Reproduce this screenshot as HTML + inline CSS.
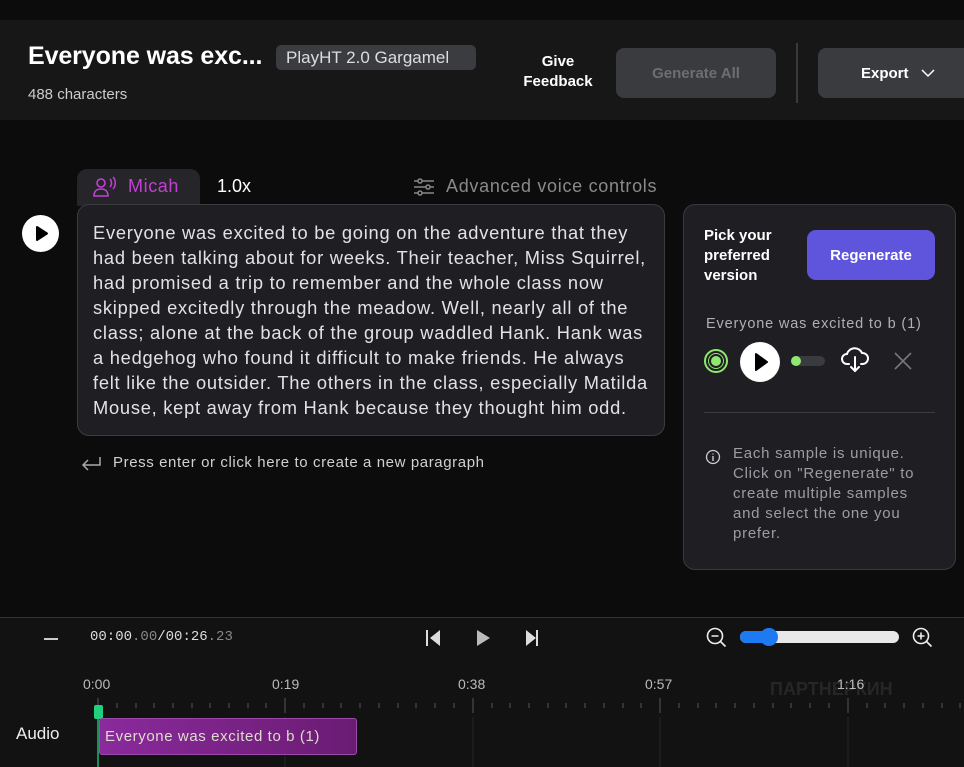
<!DOCTYPE html>
<html><head><meta charset="utf-8"><style>
*{margin:0;padding:0;box-sizing:border-box}
body{width:964px;height:767px;overflow:hidden;background:#0c0c0d;font-family:"Liberation Sans",sans-serif;color:#fff;position:relative}
.a{position:absolute;white-space:nowrap}
.btn{position:absolute;background:#3a3b3f;border-radius:8px;display:flex;align-items:center;justify-content:center;font-weight:bold;font-size:15px}
</style></head><body>
<div class="a" style="left:0;top:20px;width:964px;height:100px;background:#171717"></div>
<div class="a" style="left:28px;top:42px;font-size:25px;font-weight:bold;letter-spacing:-0.1px">Everyone was exc...</div>
<div class="a" style="left:276px;top:45px;width:200px;height:25px;background:#3b3c40;border-radius:5px;font-size:17px;color:#ddd;padding:3px 0 0 10px">PlayHT 2.0 Gargamel</div>
<div class="a" style="left:28px;top:86px;font-size:15px;color:#ccc">488 characters</div>
<div class="a" style="left:516px;top:52px;width:84px;text-align:center;font-size:15px;font-weight:bold;line-height:20px">Give<br>Feedback</div>
<div class="btn" style="left:616px;top:48px;width:160px;height:50px;color:#6e6e70">Generate All</div>
<div class="a" style="left:796px;top:43px;width:2px;height:60px;background:#3a3a3a"></div>
<div class="btn" style="left:818px;top:48px;width:160px;height:50px;justify-content:flex-start;padding-left:43px">Export <svg width="14" height="10" style="margin-left:12px" viewBox="0 0 14 10"><path d="M1 2l6 6 6-6" stroke="#fff" stroke-width="1.5" fill="none"/></svg></div>

<div class="a" style="left:77px;top:169px;width:123px;height:37px;background:#26262a;border-radius:10px 10px 0 0"></div>
<svg class="a" style="left:93px;top:176px" width="26" height="22" viewBox="0 0 26 22"><circle cx="8" cy="7" r="4" stroke="#c43fd6" stroke-width="1.6" fill="none"/><path d="M1 20c0-5 3-7 7-7s7 2 7 7z" stroke="#c43fd6" stroke-width="1.6" fill="none"/><path d="M17 3c2 2 2 6 0 8M20 1c3 3 3 9 0 12" stroke="#c43fd6" stroke-width="1.5" fill="none"/></svg>
<div class="a" style="left:128px;top:176px;font-size:18px;letter-spacing:0.6px;color:#c43fd6">Micah</div>
<div class="a" style="left:217px;top:176px;font-size:18px">1.0x</div>
<svg class="a" style="left:413px;top:178px" width="22" height="18" viewBox="0 0 22 18"><path d="M1 3h20M1 9h20M1 15h20" stroke="#888" stroke-width="1.5"/><circle cx="7" cy="3" r="2" fill="#0c0c0d" stroke="#888" stroke-width="1.5"/><circle cx="15" cy="9" r="2" fill="#0c0c0d" stroke="#888" stroke-width="1.5"/><circle cx="7" cy="15" r="2" fill="#0c0c0d" stroke="#888" stroke-width="1.5"/></svg>
<div class="a" style="left:446px;top:176px;font-size:18px;letter-spacing:0.7px;color:#8a8a8c">Advanced voice controls</div>

<div class="a" style="left:22px;top:215px;width:37px;height:37px;border-radius:50%;background:#fff"></div>
<svg class="a" style="left:22px;top:215px" width="37" height="37"><path d="M15 12l10 6.5-10 6.5z" fill="#000" stroke="#000" stroke-width="2" stroke-linejoin="round"/></svg>

<div class="a" style="left:77px;top:204px;width:588px;height:232px;background:#1f1f23;border:1px solid #3c3c40;border-radius:12px"></div>
<div class="a" style="left:93px;top:220px;font-size:18.3px;letter-spacing:0.75px;line-height:25px;color:#e2e2e4">Everyone was excited to be going on the adventure that they<br>had been talking about for weeks. Their teacher, Miss Squirrel,<br>had promised a trip to remember and the whole class now<br>skipped excitedly through the meadow. Well, nearly all of the<br>class; alone at the back of the group waddled Hank. Hank was<br>a hedgehog who found it difficult to make friends. He always<br>felt like the outsider. The others in the class, especially Matilda<br>Mouse, kept away from Hank because they thought him odd.</div>
<svg class="a" style="left:80px;top:455px" width="22" height="18"><path d="M20 2v8H3M8 5l-5 5 5 5" stroke="#aaa" stroke-width="1.5" fill="none"/></svg>
<div class="a" style="left:113px;top:454px;font-size:15px;letter-spacing:0.6px;color:#d0d0d0">Press enter or click here to create a new paragraph</div>

<div class="a" style="left:683px;top:204px;width:273px;height:366px;background:#1f1f23;border:1px solid #3a3a3e;border-radius:12px"></div>
<div class="a" style="left:704px;top:226px;font-size:15px;font-weight:bold;line-height:20px">Pick your<br>preferred<br>version</div>
<div class="btn" style="left:807px;top:230px;width:128px;height:50px;background:#5e55dc;border-radius:9px">Regenerate</div>
<div class="a" style="left:706px;top:316px;font-size:14.5px;letter-spacing:0.85px;color:#b0b0b4">Everyone was excited to b (1)</div>
<div class="a" style="left:704px;top:349px;width:24px;height:24px;border-radius:50%;border:2px solid #8fe870;background:#1f1f23"></div>
<div class="a" style="left:709px;top:354px;width:14px;height:14px;border-radius:50%;background:#8fe870;border:2px solid #1f1f23;box-shadow:0 0 0 1px #8fe870"></div>
<div class="a" style="left:740px;top:342px;width:40px;height:40px;border-radius:50%;background:#fff"></div>
<svg class="a" style="left:740px;top:342px" width="40" height="40"><path d="M16 12l11 8-11 8z" fill="#000" stroke="#000" stroke-width="2" stroke-linejoin="round"/></svg>
<div class="a" style="left:791px;top:356px;width:34px;height:10px;border-radius:5px;background:#3a3b3f"></div>
<div class="a" style="left:791px;top:356px;width:10px;height:10px;border-radius:50%;background:#8fe870"></div>
<svg class="a" style="left:841px;top:345px" width="28" height="30" viewBox="0 0 28 30"><path d="M8 19H6a5 5 0 0 1 0-10 8 8 0 0 1 15-1 5 5 0 0 1 1 11h-2M14 12v14M10 22l4 4 4-4" stroke="#fff" stroke-width="2" fill="none" stroke-linecap="round"/></svg>
<svg class="a" style="left:893px;top:351px" width="20" height="20"><path d="M2 2l16 16M18 2L2 18" stroke="#777" stroke-width="1.6"/></svg>
<div class="a" style="left:704px;top:412px;width:231px;height:1px;background:#3c3c40"></div>
<svg class="a" style="left:705px;top:449px" width="16" height="16"><circle cx="8" cy="8" r="6.5" stroke="#ccc" stroke-width="1.3" fill="none"/><path d="M8 7v5M8 4.5v1" stroke="#ccc" stroke-width="1.4"/></svg>
<div class="a" style="left:733px;top:444px;font-size:15px;letter-spacing:0.75px;line-height:20px;color:#9c9ca2">Each sample is unique.<br>Click on "Regenerate" to<br>create multiple samples<br>and select the one you<br>prefer.</div>

<div class="a" style="left:0;top:617px;width:964px;height:150px;background:#121212;border-top:1px solid #333"></div>
<div class="a" style="left:44px;top:638px;width:14px;height:2px;background:#ccc"></div>
<div class="a" style="left:90px;top:629px;font-family:'Liberation Mono',monospace;font-size:14px;color:#ddd">00:00<span style="color:#888">.00</span>/00:26<span style="color:#888">.23</span></div>
<svg class="a" style="left:425px;top:628px" width="120" height="20"><path d="M2 2v16" stroke="#ddd" stroke-width="2"/><path d="M15 2v16L5 10z" fill="#ddd"/><path d="M52 2v16l13-8z" fill="#bbb"/><path d="M101 2v16l10-8z" fill="#ddd"/><path d="M112 2v16" stroke="#ddd" stroke-width="2"/></svg>
<svg class="a" style="left:705px;top:626px" width="24" height="24"><circle cx="10" cy="10" r="7.5" stroke="#eee" stroke-width="1.6" fill="none"/><path d="M6.5 10h7M15.5 15.5l5 5" stroke="#eee" stroke-width="1.6"/></svg>
<div class="a" style="left:740px;top:631px;width:159px;height:12px;border-radius:6px;background:#e8e8e8"></div>
<div class="a" style="left:740px;top:631px;width:30px;height:12px;border-radius:6px;background:#1e7af0"></div>
<div class="a" style="left:760px;top:628px;width:18px;height:18px;border-radius:50%;background:#1e7af0"></div>
<svg class="a" style="left:911px;top:626px" width="24" height="24"><circle cx="10" cy="10" r="7.5" stroke="#eee" stroke-width="1.6" fill="none"/><path d="M6.5 10h7M10 6.5v7M15.5 15.5l5 5" stroke="#eee" stroke-width="1.6"/></svg>
<div class="a" style="left:770px;top:679px;font-size:18px;color:#262626;font-weight:bold">ПАРТНЕРКИН</div>
<div class="a" style="left:83px;top:676px;font-size:14px;color:#bbb">0:00</div>
<div class="a" style="left:272px;top:676px;font-size:14px;color:#bbb">0:19</div>
<div class="a" style="left:458px;top:676px;font-size:14px;color:#bbb">0:38</div>
<div class="a" style="left:645px;top:676px;font-size:14px;color:#bbb">0:57</div>
<div class="a" style="left:837px;top:676px;font-size:14px;color:#bbb">1:16</div>
<svg class="a" style="left:0;top:695px" width="964" height="72">
<g stroke="#555" stroke-width="1">
<path d="M98 3v15M285 3v15M473 3v15M660 3v15M848 3v15"/>
<path d="M117 8v5M136 8v5M154 8v5M173 8v5M192 8v5M210 8v5M229 8v5M248 8v5M266 8v5M304 8v5M323 8v5M341 8v5M360 8v5M379 8v5M398 8v5M416 8v5M435 8v5M454 8v5M492 8v5M510 8v5M529 8v5M548 8v5M566 8v5M585 8v5M604 8v5M623 8v5M641 8v5M679 8v5M698 8v5M716 8v5M735 8v5M754 8v5M773 8v5M791 8v5M810 8v5M829 8v5M867 8v5M885 8v5M904 8v5M923 8v5M942 8v5M960 8v5"/>
</g>
<g stroke="#262626"><path d="M285 22v50M473 22v50M660 22v50M848 22v50"/></g>
<path d="M98 10v62" stroke="#1fb870" stroke-width="1.5"/>
</svg>
<div class="a" style="left:94px;top:705px;width:9px;height:14px;border-radius:2px;background:#1fd07c"></div>
<div class="a" style="left:16px;top:724px;font-size:17px;color:#eee">Audio</div>
<div class="a" style="left:99px;top:718px;width:258px;height:37px;border-radius:3px;background:linear-gradient(90deg,#8a2a9c,#6a1c72);border:1px solid #9a4aa8"></div>
<div class="a" style="left:105px;top:728px;font-size:15px;letter-spacing:0.6px;color:#ddc">Everyone was excited to b (1)</div>
</body></html>
